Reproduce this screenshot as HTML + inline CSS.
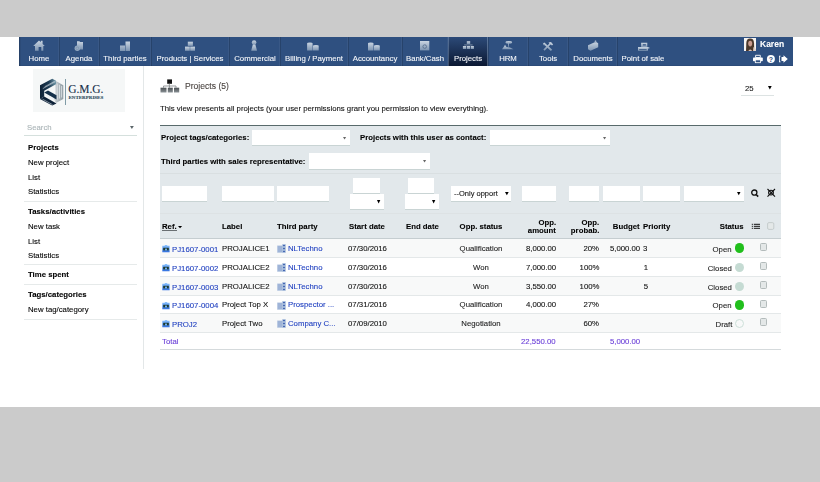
<!DOCTYPE html>
<html><head><meta charset="utf-8"><style>
html,body{margin:0;padding:0;width:820px;height:482px;overflow:hidden;background:#fff;position:relative}
.t{position:absolute;white-space:nowrap;line-height:12px;font-family:"Liberation Sans",sans-serif;-webkit-text-stroke:0.1px currentColor}
u{text-decoration-thickness:0.7px;text-underline-offset:1px}
</style></head><body>
<div style="position:absolute;left:0px;top:0px;width:820.00px;height:37.00px;background:#cbcbcb"></div>
<div style="position:absolute;left:0px;top:407px;width:820.00px;height:75.00px;background:#cbcbcb"></div>
<div style="position:absolute;left:19px;top:37px;width:774.00px;height:29.00px;background:#2f5080"></div>
<div style="position:absolute;left:19px;top:37px;width:2.00px;height:29.00px;background:linear-gradient(90deg,rgba(0,0,0,.25),rgba(0,0,0,0))"></div>
<div style="position:absolute;left:19px;top:65px;width:774.00px;height:1.00px;background:rgba(0,0,0,0.05)"></div>
<div style="position:absolute;left:58px;top:37px;width:1.00px;height:29.00px;background:rgba(255,255,255,0.05)"></div>
<div style="position:absolute;left:59px;top:37px;width:1.00px;height:29.00px;background:rgba(0,0,0,0.16)"></div>
<div class="t" style="left:-111.0px;width:300px;text-align:center;top:53px;font-size:8.034px;font-weight:400;color:#f6f8fb;transform:scaleX(0.9709);transform-origin:center 50%;">Home</div>
<div style="position:absolute;left:98px;top:37px;width:1.00px;height:29.00px;background:rgba(255,255,255,0.05)"></div>
<div style="position:absolute;left:99px;top:37px;width:1.00px;height:29.00px;background:rgba(0,0,0,0.16)"></div>
<div class="t" style="left:-71.0px;width:300px;text-align:center;top:53px;font-size:8.034px;font-weight:400;color:#f6f8fb;transform:scaleX(0.9709);transform-origin:center 50%;">Agenda</div>
<div style="position:absolute;left:150px;top:37px;width:1.00px;height:29.00px;background:rgba(255,255,255,0.05)"></div>
<div style="position:absolute;left:151px;top:37px;width:1.00px;height:29.00px;background:rgba(0,0,0,0.16)"></div>
<div class="t" style="left:-25.0px;width:300px;text-align:center;top:53px;font-size:8.034px;font-weight:400;color:#f6f8fb;transform:scaleX(0.9709);transform-origin:center 50%;">Third parties</div>
<div style="position:absolute;left:228px;top:37px;width:1.00px;height:29.00px;background:rgba(255,255,255,0.05)"></div>
<div style="position:absolute;left:229px;top:37px;width:1.00px;height:29.00px;background:rgba(0,0,0,0.16)"></div>
<div class="t" style="left:40.0px;width:300px;text-align:center;top:53px;font-size:8.034px;font-weight:400;color:#f6f8fb;transform:scaleX(0.9709);transform-origin:center 50%;">Products | Services</div>
<div style="position:absolute;left:279px;top:37px;width:1.00px;height:29.00px;background:rgba(255,255,255,0.05)"></div>
<div style="position:absolute;left:280px;top:37px;width:1.00px;height:29.00px;background:rgba(0,0,0,0.16)"></div>
<div class="t" style="left:104.5px;width:300px;text-align:center;top:53px;font-size:8.034px;font-weight:400;color:#f6f8fb;transform:scaleX(0.9709);transform-origin:center 50%;">Commercial</div>
<div style="position:absolute;left:347px;top:37px;width:1.00px;height:29.00px;background:rgba(255,255,255,0.05)"></div>
<div style="position:absolute;left:348px;top:37px;width:1.00px;height:29.00px;background:rgba(0,0,0,0.16)"></div>
<div class="t" style="left:164.0px;width:300px;text-align:center;top:53px;font-size:8.034px;font-weight:400;color:#f6f8fb;transform:scaleX(0.9709);transform-origin:center 50%;">Billing / Payment</div>
<div style="position:absolute;left:401px;top:37px;width:1.00px;height:29.00px;background:rgba(255,255,255,0.05)"></div>
<div style="position:absolute;left:402px;top:37px;width:1.00px;height:29.00px;background:rgba(0,0,0,0.16)"></div>
<div class="t" style="left:225.0px;width:300px;text-align:center;top:53px;font-size:8.034px;font-weight:400;color:#f6f8fb;transform:scaleX(0.9709);transform-origin:center 50%;">Accountancy</div>
<div style="position:absolute;left:447px;top:37px;width:1.00px;height:29.00px;background:rgba(255,255,255,0.05)"></div>
<div style="position:absolute;left:448px;top:37px;width:1.00px;height:29.00px;background:rgba(0,0,0,0.16)"></div>
<div class="t" style="left:275.0px;width:300px;text-align:center;top:53px;font-size:8.034px;font-weight:400;color:#f6f8fb;transform:scaleX(0.9709);transform-origin:center 50%;">Bank/Cash</div>
<div style="position:absolute;left:448px;top:37px;width:40.00px;height:29.00px;background:linear-gradient(#2c4a78,#0b1832)"></div>
<div style="position:absolute;left:448px;top:37px;width:1.00px;height:29.00px;background:rgba(160,185,215,0.35)"></div>
<div style="position:absolute;left:487px;top:37px;width:1.00px;height:29.00px;background:rgba(160,185,215,0.35)"></div>
<div style="position:absolute;left:487px;top:37px;width:1.00px;height:29.00px;background:rgba(255,255,255,0.05)"></div>
<div style="position:absolute;left:488px;top:37px;width:1.00px;height:29.00px;background:rgba(0,0,0,0.16)"></div>
<div class="t" style="left:318.0px;width:300px;text-align:center;top:53px;font-size:8.034px;font-weight:400;color:#f6f8fb;transform:scaleX(0.9709);transform-origin:center 50%;">Projects</div>
<div style="position:absolute;left:527px;top:37px;width:1.00px;height:29.00px;background:rgba(255,255,255,0.05)"></div>
<div style="position:absolute;left:528px;top:37px;width:1.00px;height:29.00px;background:rgba(0,0,0,0.16)"></div>
<div class="t" style="left:358.0px;width:300px;text-align:center;top:53px;font-size:8.034px;font-weight:400;color:#f6f8fb;transform:scaleX(0.9709);transform-origin:center 50%;">HRM</div>
<div style="position:absolute;left:567px;top:37px;width:1.00px;height:29.00px;background:rgba(255,255,255,0.05)"></div>
<div style="position:absolute;left:568px;top:37px;width:1.00px;height:29.00px;background:rgba(0,0,0,0.16)"></div>
<div class="t" style="left:398.0px;width:300px;text-align:center;top:53px;font-size:8.034px;font-weight:400;color:#f6f8fb;transform:scaleX(0.9709);transform-origin:center 50%;">Tools</div>
<div style="position:absolute;left:616px;top:37px;width:1.00px;height:29.00px;background:rgba(255,255,255,0.05)"></div>
<div style="position:absolute;left:617px;top:37px;width:1.00px;height:29.00px;background:rgba(0,0,0,0.16)"></div>
<div class="t" style="left:442.5px;width:300px;text-align:center;top:53px;font-size:8.034px;font-weight:400;color:#f6f8fb;transform:scaleX(0.9709);transform-origin:center 50%;">Documents</div>
<div class="t" style="left:493.0px;width:300px;text-align:center;top:53px;font-size:8.034px;font-weight:400;color:#f6f8fb;transform:scaleX(0.9709);transform-origin:center 50%;">Point of sale</div>

<svg width="820" height="70" style="position:absolute;left:0;top:0">
<defs><linearGradient id="ig" x1="0" y1="0" x2="0" y2="1"><stop offset="0" stop-color="#e6edf3"/><stop offset="1" stop-color="#8aa0ba"/></linearGradient>
<filter id="bl" x="-20%" y="-20%" width="140%" height="140%"><feGaussianBlur stdDeviation="0.35"/></filter></defs>
<g fill="url(#ig)" filter="url(#bl)" opacity="0.85">
<!-- home -->
<path d="M33.2,46 L39,40.6 L40.8,42.2 L40.8,40.8 L42.6,40.8 L42.6,43.9 L44.8,46 L43.3,46 L43.3,50.8 L41.3,50.8 L41.3,47 L38.6,47 L38.6,50.8 L35,50.8 L35,46 Z"/>
<!-- agenda -->
<path d="M77,41.2 L79.5,41.2 L80,42 L83,42 L83,49.4 L77,49.4 Z"/>
<circle cx="77.3" cy="48.3" r="2.7" fill="#a9bccf"/>
<!-- third parties -->
<path d="M125.5,41.5 L130,41.5 L130,51 L125.5,51 Z M120,45.5 L125,45.5 L125,51 L120,51 Z"/>
<!-- products -->
<rect x="187.8" y="41.7" width="5.1" height="4.2"/>
<rect x="185" y="46.6" width="4.8" height="4.2"/><rect x="190.2" y="46.6" width="4.8" height="4.2"/>
<!-- commercial -->
<circle cx="254.1" cy="42.5" r="2.3"/>
<path d="M252.8,44.5 L255.4,44.5 L257,50.8 L251.2,50.8 Z"/>
<!-- billing -->
<path d="M307.1,43.2 A2.75,0.8 0 0 1 312.6,43.2 L312.6,50.6 L307.1,50.6 Z"/>
<path d="M313,45.8 A2.85,0.7 0 0 1 318.7,45.8 L318.7,50.6 L313,50.6 Z"/>
<!-- accountancy -->
<path d="M368,43.2 A2.75,0.8 0 0 1 373.5,43.2 L373.5,50.6 L368,50.6 Z"/>
<path d="M374,45.8 A2.85,0.7 0 0 1 379.8,45.8 L379.8,50.6 L374,50.6 Z"/>
<!-- bank -->
<rect x="420" y="41" width="9.3" height="9.4"/>
<!-- projects -->
<rect x="466.8" y="41.2" width="3.4" height="2.8"/>
<rect x="462.9" y="46" width="3.2" height="3"/><rect x="466.8" y="46" width="3.2" height="3"/><rect x="470.7" y="46" width="3.2" height="3"/>
<rect x="464.2" y="44.7" width="8.4" height="0.7"/>
<!-- hrm -->
<ellipse cx="508.8" cy="42.4" rx="3.3" ry="1.3"/>
<rect x="508.3" y="43.4" width="0.7" height="3.5"/>
<path d="M502,49.2 L504,46.5 L505,44.8 L506.5,47 L510,47.6 L513.5,49.2 Z"/>
<!-- tools -->
<path d="M543.2,43.8 L544.4,42.6 L552.2,49.8 L550.8,51 Z"/>
<path d="M542.8,42.6 L545.6,45.2 L543.6,45.2 Z"/>
<path d="M548.5,42.4 L551,42 L553.2,44.4 L552,45.5 L550.6,44.5 L544.6,50.8 L543.4,49.6 L549.4,43.6 Z"/>
<!-- documents -->
<path d="M588,45.2 L595.8,41.8 L598.2,43.2 L598.2,47.3 L590.5,50.8 L588,49.2 Z"/>
<circle cx="595.5" cy="41.5" r="0.9"/>
<!-- point of sale -->
<path fill-rule="evenodd" d="M641.1,42.8 L647.3,42.8 L647.3,47 L641.1,47 Z M642.8,44.2 L642.8,45.5 L645.9,45.5 L645.9,44.2 Z"/>
<path fill-rule="evenodd" d="M638,46.9 L648,46.9 L650,48 L648,48.8 L648,50.8 L638,50.8 Z M639.2,49 L639.2,49.8 L646.6,49.8 L646.6,49 Z"/>
</g>
<circle cx="424.7" cy="46.6" r="1.8" fill="none" stroke="#5f7693" stroke-width="1" filter="url(#bl)"/>
<circle cx="77.3" cy="48.3" r="1.4" fill="none" stroke="#7088a5" stroke-width="0.5"/>
<!-- user icons -->
<g fill="#fff">
<path d="M755.6,55.3 L760.3,55.3 L760.3,57.6 L755.6,57.6 Z" fill="none" stroke="#fff" stroke-width="0.9"/>
<rect x="753" y="57.6" width="9.8" height="3.6" rx="0.8"/>
<rect x="755.3" y="59.9" width="5.2" height="2.8" fill="#2f5080" stroke="#fff" stroke-width="0.8"/>
<circle cx="770.9" cy="59" r="4"/>
<path d="M781.5,57 L783.5,57 L783.5,55.3 L787.8,59 L783.5,62.7 L783.5,61 L781.5,61 Z"/>
<path d="M779,55.8 L780.6,55.8 L780.6,56.5 L779.8,56.5 L779.8,61.6 L780.6,61.6 L780.6,62.3 L779,62.3 Z"/>
</g>
<text x="770.9" y="61.8" font-size="7" font-weight="700" font-family="Liberation Sans" fill="#2f5080" text-anchor="middle">?</text>
</svg>

<svg width="12" height="13.5" style="position:absolute;left:744px;top:37.5px">
<defs><filter id="ab"><feGaussianBlur stdDeviation="0.4"/></filter></defs>
<rect width="12" height="13.5" fill="#f6f4f2"/>
<g filter="url(#ab)">
<path d="M2,13.5 L2.3,5 Q2.5,0.6 6.2,0.6 Q9.8,0.6 10,5 L10.3,13.5 Z" fill="#4a372c"/>
<ellipse cx="6.2" cy="5.6" rx="2" ry="2.8" fill="#c99c8e"/>
<path d="M4,13.5 Q6,9.5 8.5,13.5 Z" fill="#d9c0b4"/>
<path d="M9.5,9 L12,11 L12,13.5 L9,13.5 Z" fill="#e2d3cb"/>
</g>
</svg>
<div class="t" style="left:759.5px;top:38px;font-size:8.755px;font-weight:700;color:#fff;transform:scaleX(0.9709);transform-origin:left 50%;">Karen</div>
<div style="position:absolute;left:33px;top:68.5px;width:92.00px;height:43.50px;background:#f5f7f7"></div>
<svg width="70" height="30" style="position:absolute;left:38px;top:77px">
<g transform="translate(-38,-77)">
<defs><linearGradient id="lg1" x1="0" y1="0" x2="1" y2="0"><stop offset="0" stop-color="#0f2236"/><stop offset="0.55" stop-color="#1d3a52"/><stop offset="1" stop-color="#6f98a8"/></linearGradient>
<linearGradient id="lg2" x1="0" y1="0" x2="1" y2="0"><stop offset="0" stop-color="#d0d6d9"/><stop offset="1" stop-color="#8f9ca3"/></linearGradient></defs>
<path d="M55.5,80.8 L63.3,85.2 L63.3,98.9 L56,103 L53.5,98 L55.5,96.5 Z" fill="url(#lg2)"/>
<path d="M57.2,83.5 L57.2,99.5 M59.5,84.8 L59.5,98.5 M61.6,86 L61.6,97.5" stroke="#eef2f3" stroke-width="0.7"/>
<path d="M40,85.2 L52.3,78.7 L56,80.8 L56,84.2 L44.2,90.8 L44.2,96.6 L40,98.9 Z" fill="url(#lg1)"/>
<path d="M40,98.9 L44.2,96.6 L56.5,103.4 L52.2,105.4 Z" fill="#0e2238"/>
<path d="M44.2,92.5 L48,90.4 L56.5,95.2 L56.5,99.5 Z" fill="#14304a"/>
<path d="M42.8,88.6 L55.6,81.6 M44.6,86.8 L54.8,81.2 M42.5,99.2 L52.5,104.6 M45.6,94.8 L55.6,100.3" stroke="#dfe8ec" stroke-width="0.55" fill="none"/>
</g>
</svg>
<div style="position:absolute;left:65.3px;top:78.8px;width:0.80px;height:26.20px;background:#7f9ba6"></div>
<div class="t" style="left:68.3px;top:83px;font-size:11.500px;font-weight:400;color:#16304a;font-family:'Liberation Serif',serif;letter-spacing:-0.1px;-webkit-text-stroke:0.1px #16304a">G.M.G.</div>
<div class="t" style="left:68.5px;top:92px;font-size:5.000px;font-weight:700;color:#2a4a5a;font-family:'Liberation Serif',serif;">ENTERPRISES</div>
<div class="t" style="left:27px;top:122px;font-size:8.034px;font-weight:400;color:#a9b3b6;transform:scaleX(0.9709);transform-origin:left 50%;">Search</div>
<svg width="4.80" height="4.00" style="position:absolute;left:129.5px;top:126px"><path d="M0,0 L3.80,0 L1.90,3.00 Z" fill="#5a6468"/></svg>
<div style="position:absolute;left:24px;top:135px;width:113.00px;height:1.00px;background:#d5e0dd"></div>
<div class="t" style="left:27.5px;top:142px;font-size:8.034px;font-weight:700;color:#000;transform:scaleX(0.9709);transform-origin:left 50%;">Projects</div>
<div class="t" style="left:27.5px;top:157px;font-size:8.034px;font-weight:400;color:#000;transform:scaleX(0.9709);transform-origin:left 50%;">New project</div>
<div class="t" style="left:27.5px;top:172px;font-size:8.034px;font-weight:400;color:#000;transform:scaleX(0.9709);transform-origin:left 50%;">List</div>
<div class="t" style="left:27.5px;top:186px;font-size:8.034px;font-weight:400;color:#000;transform:scaleX(0.9709);transform-origin:left 50%;">Statistics</div>
<div class="t" style="left:27.5px;top:206px;font-size:8.034px;font-weight:700;color:#000;transform:scaleX(0.9709);transform-origin:left 50%;">Tasks/activities</div>
<div class="t" style="left:27.5px;top:221px;font-size:8.034px;font-weight:400;color:#000;transform:scaleX(0.9709);transform-origin:left 50%;">New task</div>
<div class="t" style="left:27.5px;top:236px;font-size:8.034px;font-weight:400;color:#000;transform:scaleX(0.9709);transform-origin:left 50%;">List</div>
<div class="t" style="left:27.5px;top:250px;font-size:8.034px;font-weight:400;color:#000;transform:scaleX(0.9709);transform-origin:left 50%;">Statistics</div>
<div class="t" style="left:27.5px;top:269px;font-size:8.034px;font-weight:700;color:#000;transform:scaleX(0.9709);transform-origin:left 50%;">Time spent</div>
<div class="t" style="left:27.5px;top:289px;font-size:8.034px;font-weight:700;color:#000;transform:scaleX(0.9709);transform-origin:left 50%;">Tags/categories</div>
<div class="t" style="left:27.5px;top:304px;font-size:8.034px;font-weight:400;color:#000;transform:scaleX(0.9709);transform-origin:left 50%;">New tag/category</div>
<div style="position:absolute;left:24px;top:201px;width:113.00px;height:1.00px;background:#e6eaea"></div>
<div style="position:absolute;left:24px;top:264px;width:113.00px;height:1.00px;background:#e6eaea"></div>
<div style="position:absolute;left:24px;top:284px;width:113.00px;height:1.00px;background:#e6eaea"></div>
<div style="position:absolute;left:24px;top:319px;width:113.00px;height:1.00px;background:#e6eaea"></div>
<div style="position:absolute;left:143px;top:66px;width:1.00px;height:303.00px;background:#e3e7e8"></div>
<svg width="20" height="15" style="position:absolute;left:160px;top:79px">
<defs><linearGradient id="pg" x1="0" y1="0" x2="0" y2="1"><stop offset="0" stop-color="#4a4f52"/><stop offset="1" stop-color="#8a9296"/></linearGradient></defs>
<rect x="7.2" y="0.4" width="4.8" height="4.4" fill="#111"/>
<path d="M9.3,4.8 L9.3,7 M3.5,7 L16,7 M3.5,7 L3.5,8.7 M9.5,7 L9.5,8.7 M16,7 L16,8.7" stroke="#8a8f92" stroke-width="0.9" fill="none"/>
<rect x="0.5" y="8.7" width="6" height="4.8" fill="url(#pg)"/>
<rect x="7.8" y="8.7" width="5" height="4.8" fill="url(#pg)"/>
<rect x="14" y="8.7" width="5.2" height="4.8" fill="url(#pg)"/>
</svg>
<div class="t" style="left:184.8px;top:80px;font-size:8.858px;font-weight:400;color:#4a4440;transform:scaleX(0.9709);transform-origin:left 50%;">Projects (5)</div>
<div class="t" style="left:744.6px;top:83px;font-size:8.034px;font-weight:400;color:#222;transform:scaleX(0.9709);transform-origin:left 50%;">25</div>
<svg width="4.70" height="4.40" style="position:absolute;left:767.6px;top:86px"><path d="M0,0 L3.70,0 L1.85,3.40 Z" fill="#000"/></svg>
<div style="position:absolute;left:741px;top:95px;width:33.00px;height:1.00px;background:#dde3e3"></div>
<div class="t" style="left:160.4px;top:103px;font-size:8.034px;font-weight:400;color:#111;transform:scaleX(0.9709);transform-origin:left 50%;">This view presents all projects (your user permissions grant you permission to view everything).</div>
<div style="position:absolute;left:160px;top:125px;width:621.00px;height:88.00px;background:#e2e8eb"></div>
<div style="position:absolute;left:160px;top:125px;width:621.00px;height:1.00px;background:#586a6b"></div>
<div class="t" style="left:161px;top:132px;font-size:8.034px;font-weight:700;color:#000;transform:scaleX(0.9709);transform-origin:left 50%;">Project tags/categories:</div>
<div style="position:absolute;left:252px;top:129.7px;width:98.30px;height:15.30px;background:#fff;box-shadow:0 1px 0 #c9d4d4"></div>
<svg width="4.10" height="3.60" style="position:absolute;left:342.9px;top:136.8px"><path d="M0,0 L3.10,0 L1.55,2.60 Z" fill="#666"/></svg>
<div class="t" style="left:359.6px;top:132px;font-size:8.034px;font-weight:700;color:#000;transform:scaleX(0.9709);transform-origin:left 50%;">Projects with this user as contact:</div>
<div style="position:absolute;left:489.5px;top:129.7px;width:120.50px;height:15.30px;background:#fff;box-shadow:0 1px 0 #c9d4d4"></div>
<svg width="4.10" height="3.60" style="position:absolute;left:602.5px;top:136.8px"><path d="M0,0 L3.10,0 L1.55,2.60 Z" fill="#666"/></svg>
<div class="t" style="left:161px;top:156px;font-size:8.034px;font-weight:700;color:#000;transform:scaleX(0.9709);transform-origin:left 50%;">Third parties with sales representative:</div>
<div style="position:absolute;left:309px;top:153.4px;width:121.00px;height:15.60px;background:#fff;box-shadow:0 1px 0 #c9d4d4"></div>
<svg width="4.10" height="3.60" style="position:absolute;left:422.8px;top:160.3px"><path d="M0,0 L3.10,0 L1.55,2.60 Z" fill="#666"/></svg>
<div style="position:absolute;left:160px;top:173px;width:621.00px;height:1.00px;background:#d9dfe1"></div>
<div style="position:absolute;left:161.5px;top:186px;width:45.00px;height:15.00px;background:#fff;box-shadow:0 1px 0 #c9d4d4"></div>
<div style="position:absolute;left:222px;top:186px;width:52.00px;height:15.00px;background:#fff;box-shadow:0 1px 0 #c9d4d4"></div>
<div style="position:absolute;left:276.6px;top:186px;width:52.40px;height:15.00px;background:#fff;box-shadow:0 1px 0 #c9d4d4"></div>
<div style="position:absolute;left:522px;top:186px;width:34.00px;height:15.00px;background:#fff;box-shadow:0 1px 0 #c9d4d4"></div>
<div style="position:absolute;left:569px;top:186px;width:30.00px;height:15.00px;background:#fff;box-shadow:0 1px 0 #c9d4d4"></div>
<div style="position:absolute;left:603px;top:186px;width:37.00px;height:15.00px;background:#fff;box-shadow:0 1px 0 #c9d4d4"></div>
<div style="position:absolute;left:643px;top:186px;width:37.00px;height:15.00px;background:#fff;box-shadow:0 1px 0 #c9d4d4"></div>
<div style="position:absolute;left:684px;top:186px;width:60.00px;height:15.00px;background:#fff;box-shadow:0 1px 0 #c9d4d4"></div>
<svg width="4.50" height="4.20" style="position:absolute;left:737.3px;top:191.7px"><path d="M0,0 L3.50,0 L1.75,3.20 Z" fill="#000"/></svg>
<div style="position:absolute;left:353px;top:178px;width:26.50px;height:14.60px;background:#fff;box-shadow:0 1px 0 #c9d4d4"></div>
<div style="position:absolute;left:350.3px;top:194px;width:33.70px;height:15.00px;background:#fff;box-shadow:0 1px 0 #c9d4d4"></div>
<svg width="4.30" height="4.40" style="position:absolute;left:377.3px;top:199.6px"><path d="M0,0 L3.30,0 L1.65,3.40 Z" fill="#000"/></svg>
<div style="position:absolute;left:407.6px;top:178px;width:26.80px;height:14.60px;background:#fff;box-shadow:0 1px 0 #c9d4d4"></div>
<div style="position:absolute;left:405.2px;top:194px;width:33.60px;height:15.00px;background:#fff;box-shadow:0 1px 0 #c9d4d4"></div>
<svg width="4.30" height="4.40" style="position:absolute;left:432.2px;top:199.6px"><path d="M0,0 L3.30,0 L1.65,3.40 Z" fill="#000"/></svg>
<div style="position:absolute;left:450.8px;top:185.8px;width:60.40px;height:15.40px;background:#fff;box-shadow:0 1px 0 #c9d4d4"></div>
<div class="t" style="left:454px;top:188px;font-size:7.725px;font-weight:400;color:#111;transform:scaleX(0.9709);transform-origin:left 50%;width:46px;overflow:hidden">--Only opport</div>
<svg width="4.70" height="4.30" style="position:absolute;left:504.6px;top:191.5px"><path d="M0,0 L3.70,0 L1.85,3.30 Z" fill="#000"/></svg>
<svg width="30" height="12" style="position:absolute;left:748px;top:188px">
<circle cx="6.3" cy="4.6" r="2.6" fill="none" stroke="#111" stroke-width="1.3"/>
<path d="M8.2,6.5 L10.2,8.6" stroke="#111" stroke-width="1.6"/>
<circle cx="23" cy="4.6" r="2.4" fill="none" stroke="#111" stroke-width="1.1"/>
<path d="M19.5,1 L27,8.6 M27,1 L19.5,8.6" stroke="#111" stroke-width="1.1"/>
</svg>
<div style="position:absolute;left:160px;top:213px;width:621.00px;height:25.00px;background:#e2e8eb"></div>
<div style="position:absolute;left:160px;top:213px;width:621.00px;height:1.00px;background:#dde2e4"></div>
<div style="position:absolute;left:160px;top:238px;width:621.00px;height:1.00px;background:#c5cdd0"></div>
<div class="t" style="left:162px;top:221px;font-size:8.034px;font-weight:700;color:#000;transform:scaleX(0.9709);transform-origin:left 50%;">Ref.</div>
<div style="position:absolute;left:162px;top:230px;width:14.50px;height:1.00px;background:#6a6f72"></div>
<svg width="5.10" height="3.20" style="position:absolute;left:177.8px;top:225.8px"><path d="M0,0 L4.10,0 L2.05,2.20 Z" fill="#000"/></svg>
<div class="t" style="left:222.4px;top:221px;font-size:8.034px;font-weight:700;color:#000;transform:scaleX(0.9709);transform-origin:left 50%;">Label</div>
<div class="t" style="left:277.4px;top:221px;font-size:8.034px;font-weight:700;color:#000;transform:scaleX(0.9709);transform-origin:left 50%;">Third party</div>
<div class="t" style="left:349px;top:221px;font-size:8.034px;font-weight:700;color:#000;transform:scaleX(0.9709);transform-origin:left 50%;">Start date</div>
<div class="t" style="left:405.7px;top:221px;font-size:8.034px;font-weight:700;color:#000;transform:scaleX(0.9709);transform-origin:left 50%;">End date</div>
<div class="t" style="left:331px;width:300px;text-align:center;top:221px;font-size:8.034px;font-weight:700;color:#000;transform:scaleX(0.9709);transform-origin:center 50%;">Opp. status</div>
<div class="t" style="right:264px;top:217px;font-size:8.034px;font-weight:700;color:#000;transform:scaleX(0.9709);transform-origin:right 50%;">Opp.</div>
<div class="t" style="right:264px;top:225px;font-size:8.034px;font-weight:700;color:#000;transform:scaleX(0.9709);transform-origin:right 50%;">amount</div>
<div class="t" style="right:220.70000000000005px;top:217px;font-size:8.034px;font-weight:700;color:#000;transform:scaleX(0.9709);transform-origin:right 50%;">Opp.</div>
<div class="t" style="right:220.70000000000005px;top:225px;font-size:8.034px;font-weight:700;color:#000;transform:scaleX(0.9709);transform-origin:right 50%;">probab.</div>
<div class="t" style="right:180px;top:221px;font-size:8.034px;font-weight:700;color:#000;transform:scaleX(0.9709);transform-origin:right 50%;">Budget</div>
<div class="t" style="left:643.3px;top:221px;font-size:8.034px;font-weight:700;color:#000;transform:scaleX(0.9709);transform-origin:left 50%;">Priority</div>
<div class="t" style="right:76.29999999999995px;top:221px;font-size:8.034px;font-weight:700;color:#000;transform:scaleX(0.9709);transform-origin:right 50%;">Status</div>
<svg width="30" height="12" style="position:absolute;left:750px;top:220px">
<g fill="#111"><rect x="1.8" y="3.8" width="1.1" height="1"/><rect x="1.8" y="5.8" width="1.1" height="1"/><rect x="1.8" y="7.8" width="1.1" height="1"/>
<rect x="3.8" y="3.8" width="6.2" height="1"/><rect x="3.8" y="5.8" width="6.2" height="1"/><rect x="3.8" y="7.8" width="6.2" height="1"/></g>
<rect x="17.6" y="2.6" width="6.2" height="6.8" rx="1.3" fill="#e4e8e8" stroke="#b8c0c0" stroke-width="0.7"/>
</svg>
<div style="position:absolute;left:160px;top:239px;width:621.00px;height:18.00px;background:#f8f9f9"></div>
<div style="position:absolute;left:160px;top:257px;width:621.00px;height:1.00px;background:#e4e8e9"></div>
<svg width="9" height="9" style="position:absolute;left:161.5px;top:243.5px">
<defs><linearGradient id="bi0" x1="0" y1="0" x2="0" y2="1"><stop offset="0" stop-color="#8cc4ff"/><stop offset="1" stop-color="#2f6fe0"/></linearGradient></defs>
<path d="M3,1 L5,1 L5.5,1.8 L7.6,1.8 L7.6,8.2 L0.3,8.2 L0.3,1.8 L2.6,1.8 Z" fill="url(#bi0)"/>
<rect x="1.2" y="3.8" width="5.6" height="2.6" fill="#1d3a2c"/><rect x="3" y="4.6" width="2" height="1.8" fill="#6fb0f0"/></svg>
<div class="t" style="left:172.3px;top:244px;font-size:8.034px;font-weight:400;color:#2040c0;transform:scaleX(0.9709);transform-origin:left 50%;">PJ1607-0001</div>
<div class="t" style="left:222.4px;top:243px;font-size:8.034px;font-weight:400;color:#111;transform:scaleX(0.9709);transform-origin:left 50%;">PROJALICE1</div>
<svg width="10" height="10" style="position:absolute;left:277px;top:243.8px">
<rect x="0.2" y="1.5" width="5.3" height="7.3" fill="#b4c6e0"/><rect x="5.3" y="0.2" width="3.4" height="8.6" fill="#9ab2d6"/>
<path d="M0.8,3 H5 M0.8,5 H5 M0.8,7 H5" stroke="#8099cc" stroke-width="0.8"/><path d="M6,1.5 H8 M6,4.5 H8 M6,7.5 H8" stroke="#3b5fb0" stroke-width="0.9"/></svg>
<div class="t" style="left:287.6px;top:243px;font-size:8.034px;font-weight:400;color:#2040c0;transform:scaleX(0.9709);transform-origin:left 50%;">NLTechno</div>
<div class="t" style="left:347.5px;top:243px;font-size:8.034px;font-weight:400;color:#111;transform:scaleX(0.9709);transform-origin:left 50%;">07/30/2016</div>
<div class="t" style="left:331px;width:300px;text-align:center;top:243px;font-size:8.034px;font-weight:400;color:#222;transform:scaleX(0.9709);transform-origin:center 50%;">Qualification</div>
<div class="t" style="right:264px;top:243px;font-size:8.034px;font-weight:400;color:#111;transform:scaleX(0.9709);transform-origin:right 50%;">8,000.00</div>
<div class="t" style="right:220.70000000000005px;top:243px;font-size:8.034px;font-weight:400;color:#111;transform:scaleX(0.9709);transform-origin:right 50%;">20%</div>
<div class="t" style="right:180px;top:243px;font-size:8.034px;font-weight:400;color:#111;transform:scaleX(0.9709);transform-origin:right 50%;">5,000.00</div>
<div class="t" style="left:642.7px;top:243px;font-size:8.034px;font-weight:400;color:#111;transform:scaleX(0.9709);transform-origin:left 50%;">3</div>
<div class="t" style="right:88px;top:244px;font-size:8.034px;font-weight:400;color:#222;transform:scaleX(0.9709);transform-origin:right 50%;">Open</div>
<div style="position:absolute;left:734.5px;top:243.25px;width:9.5px;height:9.5px;border-radius:50%;background:#21bf1c"></div>
<div style="position:absolute;left:760px;top:243.4px;width:5.4px;height:5.4px;border:0.7px solid #b3bbbb;border-radius:1.5px;background:#e4e8e8"></div>
<div style="position:absolute;left:160px;top:258px;width:621.00px;height:18.00px;background:#fff"></div>
<div style="position:absolute;left:160px;top:276px;width:621.00px;height:1.00px;background:#e4e8e9"></div>
<svg width="9" height="9" style="position:absolute;left:161.5px;top:262.5px">
<defs><linearGradient id="bi1" x1="0" y1="0" x2="0" y2="1"><stop offset="0" stop-color="#8cc4ff"/><stop offset="1" stop-color="#2f6fe0"/></linearGradient></defs>
<path d="M3,1 L5,1 L5.5,1.8 L7.6,1.8 L7.6,8.2 L0.3,8.2 L0.3,1.8 L2.6,1.8 Z" fill="url(#bi1)"/>
<rect x="1.2" y="3.8" width="5.6" height="2.6" fill="#1d3a2c"/><rect x="3" y="4.6" width="2" height="1.8" fill="#6fb0f0"/></svg>
<div class="t" style="left:172.3px;top:263px;font-size:8.034px;font-weight:400;color:#2040c0;transform:scaleX(0.9709);transform-origin:left 50%;">PJ1607-0002</div>
<div class="t" style="left:222.4px;top:262px;font-size:8.034px;font-weight:400;color:#111;transform:scaleX(0.9709);transform-origin:left 50%;">PROJALICE2</div>
<svg width="10" height="10" style="position:absolute;left:277px;top:262.8px">
<rect x="0.2" y="1.5" width="5.3" height="7.3" fill="#b4c6e0"/><rect x="5.3" y="0.2" width="3.4" height="8.6" fill="#9ab2d6"/>
<path d="M0.8,3 H5 M0.8,5 H5 M0.8,7 H5" stroke="#8099cc" stroke-width="0.8"/><path d="M6,1.5 H8 M6,4.5 H8 M6,7.5 H8" stroke="#3b5fb0" stroke-width="0.9"/></svg>
<div class="t" style="left:287.6px;top:262px;font-size:8.034px;font-weight:400;color:#2040c0;transform:scaleX(0.9709);transform-origin:left 50%;">NLTechno</div>
<div class="t" style="left:347.5px;top:262px;font-size:8.034px;font-weight:400;color:#111;transform:scaleX(0.9709);transform-origin:left 50%;">07/30/2016</div>
<div class="t" style="left:331px;width:300px;text-align:center;top:262px;font-size:8.034px;font-weight:400;color:#222;transform:scaleX(0.9709);transform-origin:center 50%;">Won</div>
<div class="t" style="right:264px;top:262px;font-size:8.034px;font-weight:400;color:#111;transform:scaleX(0.9709);transform-origin:right 50%;">7,000.00</div>
<div class="t" style="right:220.70000000000005px;top:262px;font-size:8.034px;font-weight:400;color:#111;transform:scaleX(0.9709);transform-origin:right 50%;">100%</div>
<div class="t" style="left:495.5px;width:300px;text-align:center;top:262px;font-size:8.034px;font-weight:400;color:#111;transform:scaleX(0.9709);transform-origin:center 50%;">1</div>
<div class="t" style="right:88px;top:263px;font-size:8.034px;font-weight:400;color:#222;transform:scaleX(0.9709);transform-origin:right 50%;">Closed</div>
<div style="position:absolute;left:734.8px;top:262.5px;width:9px;height:9px;border-radius:50%;background:#c5dbd3"></div>
<div style="position:absolute;left:760px;top:262.4px;width:5.4px;height:5.4px;border:0.7px solid #b3bbbb;border-radius:1.5px;background:#e4e8e8"></div>
<div style="position:absolute;left:160px;top:277px;width:621.00px;height:18.00px;background:#f8f9f9"></div>
<div style="position:absolute;left:160px;top:295px;width:621.00px;height:1.00px;background:#e4e8e9"></div>
<svg width="9" height="9" style="position:absolute;left:161.5px;top:281.5px">
<defs><linearGradient id="bi2" x1="0" y1="0" x2="0" y2="1"><stop offset="0" stop-color="#8cc4ff"/><stop offset="1" stop-color="#2f6fe0"/></linearGradient></defs>
<path d="M3,1 L5,1 L5.5,1.8 L7.6,1.8 L7.6,8.2 L0.3,8.2 L0.3,1.8 L2.6,1.8 Z" fill="url(#bi2)"/>
<rect x="1.2" y="3.8" width="5.6" height="2.6" fill="#1d3a2c"/><rect x="3" y="4.6" width="2" height="1.8" fill="#6fb0f0"/></svg>
<div class="t" style="left:172.3px;top:282px;font-size:8.034px;font-weight:400;color:#2040c0;transform:scaleX(0.9709);transform-origin:left 50%;">PJ1607-0003</div>
<div class="t" style="left:222.4px;top:281px;font-size:8.034px;font-weight:400;color:#111;transform:scaleX(0.9709);transform-origin:left 50%;">PROJALICE2</div>
<svg width="10" height="10" style="position:absolute;left:277px;top:281.8px">
<rect x="0.2" y="1.5" width="5.3" height="7.3" fill="#b4c6e0"/><rect x="5.3" y="0.2" width="3.4" height="8.6" fill="#9ab2d6"/>
<path d="M0.8,3 H5 M0.8,5 H5 M0.8,7 H5" stroke="#8099cc" stroke-width="0.8"/><path d="M6,1.5 H8 M6,4.5 H8 M6,7.5 H8" stroke="#3b5fb0" stroke-width="0.9"/></svg>
<div class="t" style="left:287.6px;top:281px;font-size:8.034px;font-weight:400;color:#2040c0;transform:scaleX(0.9709);transform-origin:left 50%;">NLTechno</div>
<div class="t" style="left:347.5px;top:281px;font-size:8.034px;font-weight:400;color:#111;transform:scaleX(0.9709);transform-origin:left 50%;">07/30/2016</div>
<div class="t" style="left:331px;width:300px;text-align:center;top:281px;font-size:8.034px;font-weight:400;color:#222;transform:scaleX(0.9709);transform-origin:center 50%;">Won</div>
<div class="t" style="right:264px;top:281px;font-size:8.034px;font-weight:400;color:#111;transform:scaleX(0.9709);transform-origin:right 50%;">3,550.00</div>
<div class="t" style="right:220.70000000000005px;top:281px;font-size:8.034px;font-weight:400;color:#111;transform:scaleX(0.9709);transform-origin:right 50%;">100%</div>
<div class="t" style="left:495.5px;width:300px;text-align:center;top:281px;font-size:8.034px;font-weight:400;color:#111;transform:scaleX(0.9709);transform-origin:center 50%;">5</div>
<div class="t" style="right:88px;top:282px;font-size:8.034px;font-weight:400;color:#222;transform:scaleX(0.9709);transform-origin:right 50%;">Closed</div>
<div style="position:absolute;left:734.8px;top:281.5px;width:9px;height:9px;border-radius:50%;background:#c5dbd3"></div>
<div style="position:absolute;left:760px;top:281.4px;width:5.4px;height:5.4px;border:0.7px solid #b3bbbb;border-radius:1.5px;background:#e4e8e8"></div>
<div style="position:absolute;left:160px;top:296px;width:621.00px;height:17.00px;background:#fff"></div>
<div style="position:absolute;left:160px;top:313px;width:621.00px;height:1.00px;background:#e4e8e9"></div>
<svg width="9" height="9" style="position:absolute;left:161.5px;top:300.5px">
<defs><linearGradient id="bi3" x1="0" y1="0" x2="0" y2="1"><stop offset="0" stop-color="#8cc4ff"/><stop offset="1" stop-color="#2f6fe0"/></linearGradient></defs>
<path d="M3,1 L5,1 L5.5,1.8 L7.6,1.8 L7.6,8.2 L0.3,8.2 L0.3,1.8 L2.6,1.8 Z" fill="url(#bi3)"/>
<rect x="1.2" y="3.8" width="5.6" height="2.6" fill="#1d3a2c"/><rect x="3" y="4.6" width="2" height="1.8" fill="#6fb0f0"/></svg>
<div class="t" style="left:172.3px;top:300px;font-size:8.034px;font-weight:400;color:#2040c0;transform:scaleX(0.9709);transform-origin:left 50%;">PJ1607-0004</div>
<div class="t" style="left:222.4px;top:299px;font-size:8.034px;font-weight:400;color:#111;transform:scaleX(0.9709);transform-origin:left 50%;">Project Top X</div>
<svg width="10" height="10" style="position:absolute;left:277px;top:300.8px">
<rect x="0.2" y="1.5" width="5.3" height="7.3" fill="#b4c6e0"/><rect x="5.3" y="0.2" width="3.4" height="8.6" fill="#9ab2d6"/>
<path d="M0.8,3 H5 M0.8,5 H5 M0.8,7 H5" stroke="#8099cc" stroke-width="0.8"/><path d="M6,1.5 H8 M6,4.5 H8 M6,7.5 H8" stroke="#3b5fb0" stroke-width="0.9"/></svg>
<div class="t" style="left:287.6px;top:299px;font-size:8.034px;font-weight:400;color:#2040c0;transform:scaleX(0.9709);transform-origin:left 50%;">Prospector ...</div>
<div class="t" style="left:347.5px;top:299px;font-size:8.034px;font-weight:400;color:#111;transform:scaleX(0.9709);transform-origin:left 50%;">07/31/2016</div>
<div class="t" style="left:331px;width:300px;text-align:center;top:299px;font-size:8.034px;font-weight:400;color:#222;transform:scaleX(0.9709);transform-origin:center 50%;">Qualification</div>
<div class="t" style="right:264px;top:299px;font-size:8.034px;font-weight:400;color:#111;transform:scaleX(0.9709);transform-origin:right 50%;">4,000.00</div>
<div class="t" style="right:220.70000000000005px;top:299px;font-size:8.034px;font-weight:400;color:#111;transform:scaleX(0.9709);transform-origin:right 50%;">27%</div>
<div class="t" style="right:88px;top:300px;font-size:8.034px;font-weight:400;color:#222;transform:scaleX(0.9709);transform-origin:right 50%;">Open</div>
<div style="position:absolute;left:734.5px;top:300.25px;width:9.5px;height:9.5px;border-radius:50%;background:#21bf1c"></div>
<div style="position:absolute;left:760px;top:300.4px;width:5.4px;height:5.4px;border:0.7px solid #b3bbbb;border-radius:1.5px;background:#e4e8e8"></div>
<div style="position:absolute;left:160px;top:314px;width:621.00px;height:18.00px;background:#f8f9f9"></div>
<div style="position:absolute;left:160px;top:332px;width:621.00px;height:1.00px;background:#e4e8e9"></div>
<svg width="9" height="9" style="position:absolute;left:161.5px;top:318.5px">
<defs><linearGradient id="bi4" x1="0" y1="0" x2="0" y2="1"><stop offset="0" stop-color="#8cc4ff"/><stop offset="1" stop-color="#2f6fe0"/></linearGradient></defs>
<path d="M3,1 L5,1 L5.5,1.8 L7.6,1.8 L7.6,8.2 L0.3,8.2 L0.3,1.8 L2.6,1.8 Z" fill="url(#bi4)"/>
<rect x="1.2" y="3.8" width="5.6" height="2.6" fill="#1d3a2c"/><rect x="3" y="4.6" width="2" height="1.8" fill="#6fb0f0"/></svg>
<div class="t" style="left:172.3px;top:319px;font-size:8.034px;font-weight:400;color:#2040c0;transform:scaleX(0.9709);transform-origin:left 50%;">PROJ2</div>
<div class="t" style="left:222.4px;top:318px;font-size:8.034px;font-weight:400;color:#111;transform:scaleX(0.9709);transform-origin:left 50%;">Project Two</div>
<svg width="10" height="10" style="position:absolute;left:277px;top:318.8px">
<rect x="0.2" y="1.5" width="5.3" height="7.3" fill="#b4c6e0"/><rect x="5.3" y="0.2" width="3.4" height="8.6" fill="#9ab2d6"/>
<path d="M0.8,3 H5 M0.8,5 H5 M0.8,7 H5" stroke="#8099cc" stroke-width="0.8"/><path d="M6,1.5 H8 M6,4.5 H8 M6,7.5 H8" stroke="#3b5fb0" stroke-width="0.9"/></svg>
<div class="t" style="left:287.6px;top:318px;font-size:8.034px;font-weight:400;color:#2040c0;transform:scaleX(0.9709);transform-origin:left 50%;">Company C...</div>
<div class="t" style="left:347.5px;top:318px;font-size:8.034px;font-weight:400;color:#111;transform:scaleX(0.9709);transform-origin:left 50%;">07/09/2010</div>
<div class="t" style="left:331px;width:300px;text-align:center;top:318px;font-size:8.034px;font-weight:400;color:#222;transform:scaleX(0.9709);transform-origin:center 50%;">Negotiation</div>
<div class="t" style="right:220.70000000000005px;top:318px;font-size:8.034px;font-weight:400;color:#111;transform:scaleX(0.9709);transform-origin:right 50%;">60%</div>
<div class="t" style="right:88px;top:319px;font-size:8.034px;font-weight:400;color:#222;transform:scaleX(0.9709);transform-origin:right 50%;">Draft</div>
<div style="position:absolute;left:734.8px;top:318.5px;width:7.2px;height:7.2px;border-radius:50%;border:0.9px solid #cde0d9"></div>
<div style="position:absolute;left:760px;top:318.4px;width:5.4px;height:5.4px;border:0.7px solid #b3bbbb;border-radius:1.5px;background:#e4e8e8"></div>
<div class="t" style="left:162px;top:336px;font-size:8.034px;font-weight:400;color:#6a3fd8;transform:scaleX(0.9709);transform-origin:left 50%;">Total</div>
<div class="t" style="right:264px;top:336px;font-size:8.034px;font-weight:400;color:#6a3fd8;transform:scaleX(0.9709);transform-origin:right 50%;">22,550.00</div>
<div class="t" style="right:180px;top:336px;font-size:8.034px;font-weight:400;color:#6a3fd8;transform:scaleX(0.9709);transform-origin:right 50%;">5,000.00</div>
<div style="position:absolute;left:160px;top:349px;width:621.00px;height:1.00px;background:#d5dadc"></div>
</body></html>
